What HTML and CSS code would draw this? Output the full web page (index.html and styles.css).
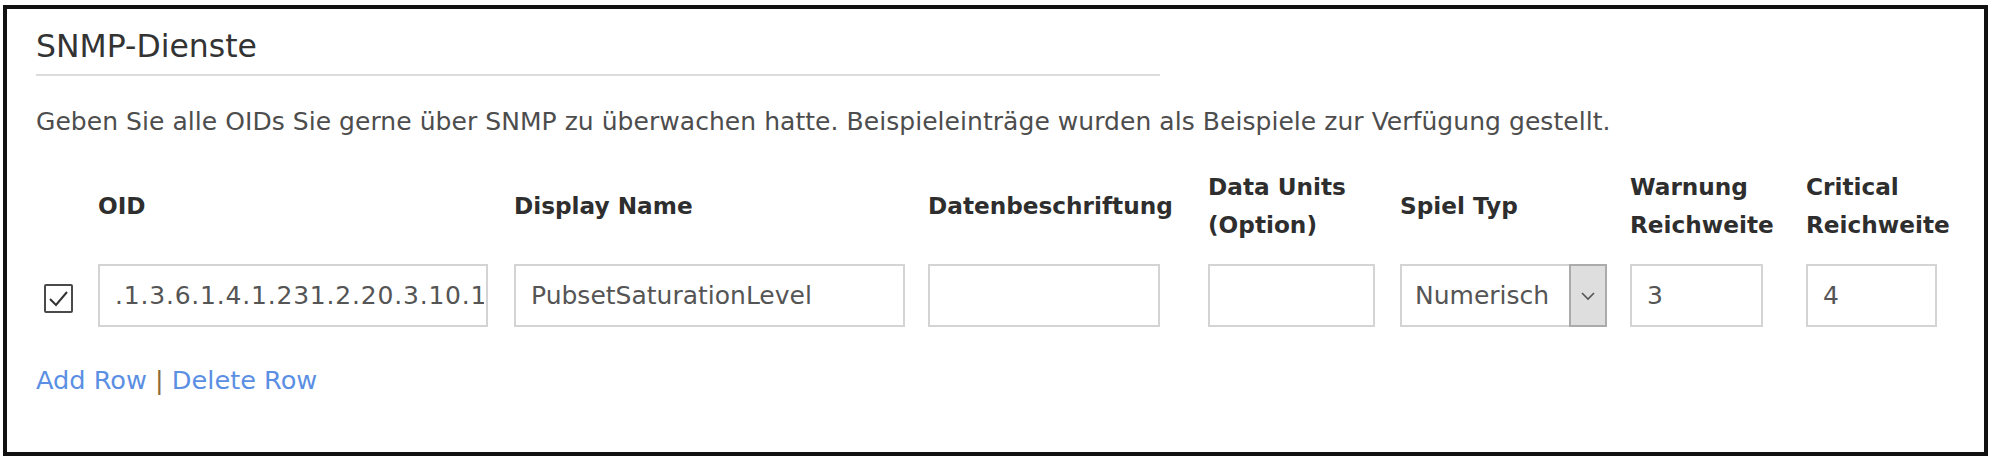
FILE: index.html
```html
<!DOCTYPE html>
<html lang="de">
<head>
<meta charset="utf-8">
<title>SNMP-Dienste</title>
<link rel="stylesheet" href="styles.css">
</head>
<body>
<div class="frame">
  <h2 class="title">SNMP-Dienste</h2>
  <p class="desc">Geben Sie alle OIDs Sie gerne über SNMP zu überwachen hatte. Beispieleinträge wurden als Beispiele zur Verfügung gestellt.</p>
  <div class="grid">
    <div class="hd"></div>
    <div class="hd">OID</div>
    <div class="hd">Display Name</div>
    <div class="hd">Datenbeschriftung</div>
    <div class="hd">Data Units<br>(Option)</div>
    <div class="hd">Spiel Typ</div>
    <div class="hd">Warnung<br>Reichweite</div>
    <div class="hd">Critical<br>Reichweite</div>

    <div class="cell cb-cell">
      <span class="checkbox"><svg width="25" height="25" viewBox="0 0 25 25"><polyline points="4,13 10,19 21,6" fill="none" stroke="#333" stroke-width="2"/></svg></span>
    </div>
    <div class="cell"><input class="field w-oid" type="text" value=".1.3.6.1.4.1.231.2.20.3.10.1.1"></div>
    <div class="cell"><input class="field w-dn" type="text" value="PubsetSaturationLevel"></div>
    <div class="cell"><input class="field w-label" type="text" value=""></div>
    <div class="cell"><input class="field w-units" type="text" value=""></div>
    <div class="cell">
      <div class="select">
        <span class="select-text">Numerisch</span>
        <span class="select-btn"><svg width="16" height="10" viewBox="0 0 16 10"><polyline points="2,2 8,8 14,2" fill="none" stroke="#555" stroke-width="1.6"/></svg></span>
      </div>
    </div>
    <div class="cell"><input class="field w-warn" type="text" value="3"></div>
    <div class="cell"><input class="field w-crit" type="text" value="4"></div>
  </div>
  <div class="links"><a class="link" href="#">Add Row</a> <span class="sep">|</span> <a class="link" href="#">Delete Row</a></div>
</div>
</body>
</html>
```

FILE: styles.css
```css
html, body {
  margin: 0;
  padding: 0;
  background: #fff;
}
body {
  font-family: "DejaVu Sans", Verdana, sans-serif;
  color: #444;
}
.frame {
  box-sizing: border-box;
  margin: 5px 0 0 3px;
  width: 1985px;
  height: 451px;
  border: 4px solid #111;
  padding: 17px 29px 0;
}
.title {
  margin: 0;
  width: 1124px;
  font-size: 31.5px;
  font-weight: normal;
  line-height: 40px;
  color: #333;
  padding-bottom: 8px;
  border-bottom: 2px solid #dcdcdc;
}
.desc {
  margin: 30px 0 0;
  font-size: 25px;
  line-height: 32px;
  color: #4d4d4d;
  letter-spacing: 0.05px;
}
.grid {
  display: grid;
  margin: 30px 0 0 8px;
  grid-template-columns: 54px 416px 414px 280px 192px 230px 176px 160px;
  grid-template-rows: 76px 63px;
  row-gap: 20px;
}
.hd {
  align-self: center;
  font-weight: bold;
  font-size: 23.2px;
  line-height: 38px;
  color: #2e2e2e;
}
.cell {
  display: flex;
  align-items: center;
}
.cb-cell {
  padding-top: 5px;
}
.checkbox {
  box-sizing: border-box;
  width: 29px;
  height: 29px;
  border: 2px solid #4a4a4a;
  border-radius: 2px;
  display: flex;
  align-items: center;
  justify-content: center;
  background: #fff;
}
.field {
  box-sizing: border-box;
  height: 63px;
  border: 2px solid #d4d4d4;
  padding: 0 2px 0 15px;
  font-family: "DejaVu Sans", Verdana, sans-serif;
  font-size: 25px;
  color: #555;
  background: #fff;
  outline: none;
  margin: 0;
}
.w-oid { width: 390px; letter-spacing: 0.8px; }
.w-dn { width: 391px; }
.w-label { width: 232px; }
.w-units { width: 167px; }
.w-warn { width: 133px; }
.w-crit { width: 131px; }
.select {
  box-sizing: border-box;
  width: 207px;
  height: 63px;
  border: 2px solid #d4d4d4;
  display: flex;
  align-items: stretch;
  background: #fff;
}
.select-text {
  flex: 1;
  display: flex;
  align-items: center;
  padding-left: 13px;
  font-size: 25px;
  color: #555;
}
.select-btn {
  box-sizing: border-box;
  width: 38px;
  margin: -2px -2px -2px 0;
  background: #dedede;
  border: 2px solid #ababab;
  display: flex;
  align-items: center;
  justify-content: center;
}
.links {
  margin-top: 37px;
  font-size: 25.6px;
  line-height: 32px;
  color: #8b6a3a;
}
.link {
  color: #5b8fe3;
  text-decoration: none;
}
.sep {
  color: #8b6a3a;
}
```
